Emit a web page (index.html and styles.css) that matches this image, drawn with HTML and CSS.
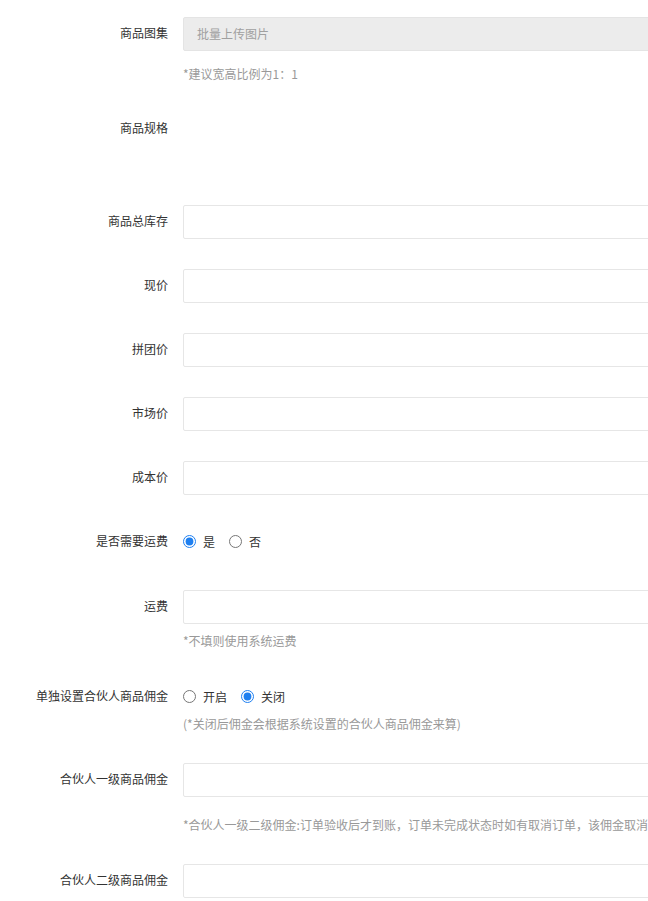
FILE: index.html
```html
<!DOCTYPE html>
<html lang="zh-CN">
<head>
<meta charset="utf-8">
<title>商品表单</title>
<link rel="stylesheet" href="styles.css">
</head>
<body>
<form class="form">
  <div class="row row-gallery">
    <label class="label">商品图集</label>
    <div class="field">
      <div class="upload">批量上传图片</div>
      <div class="hint hint-gallery">*建议宽高比例为1：1</div>
    </div>
  </div>

  <div class="row row-spec">
    <label class="label">商品规格</label>
    <div class="field"></div>
  </div>

  <div class="row row-first">
    <label class="label">商品总库存</label>
    <div class="field"><input class="input" type="text"></div>
  </div>
  <div class="row">
    <label class="label">现价</label>
    <div class="field"><input class="input" type="text"></div>
  </div>
  <div class="row">
    <label class="label">拼团价</label>
    <div class="field"><input class="input" type="text"></div>
  </div>
  <div class="row">
    <label class="label">市场价</label>
    <div class="field"><input class="input" type="text"></div>
  </div>
  <div class="row">
    <label class="label">成本价</label>
    <div class="field"><input class="input" type="text"></div>
  </div>

  <div class="row row-radio">
    <label class="label">是否需要运费</label>
    <div class="field radios">
      <label class="radio"><input type="radio" name="ship" checked><span>是</span></label>
      <label class="radio"><input type="radio" name="ship"><span>否</span></label>
    </div>
  </div>

  <div class="row row-freight">
    <label class="label">运费</label>
    <div class="field">
      <input class="input" type="text">
      <div class="hint hint-freight">*不填则使用系统运费</div>
    </div>
  </div>

  <div class="row row-commission">
    <label class="label">单独设置合伙人商品佣金</label>
    <div class="field">
      <div class="radios">
        <label class="radio"><input type="radio" name="comm"><span>开启</span></label>
        <label class="radio"><input type="radio" name="comm" checked><span>关闭</span></label>
      </div>
      <div class="hint hint-commission">(*关闭后佣金会根据系统设置的合伙人商品佣金来算)</div>
    </div>
  </div>

  <div class="row row-level1">
    <label class="label">合伙人一级商品佣金</label>
    <div class="field">
      <input class="input" type="text">
      <div class="hint hint-level1">*合伙人一级二级佣金:订单验收后才到账，订单未完成状态时如有取消订单，该佣金取消</div>
    </div>
  </div>

  <div class="row row-level2">
    <label class="label">合伙人二级商品佣金</label>
    <div class="field"><input class="input" type="text"></div>
  </div>
</form>
</body>
</html>
```

FILE: styles.css
```css
html, body {
  margin: 0;
  padding: 0;
  background: #fff;
  overflow: hidden;
}
body {
  font-family: "Microsoft YaHei", "Noto Sans CJK SC", "Noto Sans", sans-serif;
  font-size: 12px;
  color: #333;
  width: 648px;
}
.form {
  padding-top: 17px;
}
.row {
  display: flex;
  align-items: flex-start;
  margin-bottom: 30px;
}
.label {
  flex: 0 0 168px;
  width: 168px;
  margin-right: 15px;
  text-align: right;
  line-height: 32px;
  height: 34px;
  white-space: nowrap;
  color: #333;
}
.field {
  flex: 0 0 auto;
  width: 600px;
}
.upload {
  box-sizing: border-box;
  height: 34px;
  line-height: 32px;
  background: #ececec;
  border: 1px solid #e4e4e4;
  border-radius: 2px;
  padding-left: 13px;
  color: #a0a0a0;
}
.input {
  display: block;
  box-sizing: border-box;
  width: 600px;
  height: 34px;
  margin: 0;
  border: 1px solid #e6e6e6;
  border-radius: 2px;
  background: #fff;
  outline: none;
  padding: 0 10px;
  font: inherit;
}
.hint {
  color: #999;
  line-height: 20px;
  white-space: nowrap;
}
.hint-gallery { margin-top: 13px; }
.row-gallery { margin-bottom: 28px; }
.row-spec { margin-bottom: 59px; }
.row-spec .field { height: 34px; }

.radios {
  display: flex;
  align-items: center;
  height: 32px;
}
.radio {
  display: flex;
  align-items: center;
  margin-right: 14px;
  cursor: pointer;
}
.radio input {
  width: 13px;
  height: 13px;
  margin: 0 7px 0 0;
  accent-color: #1e7ff0;
}
.row-radio { margin-bottom: 31px; }

.hint-freight { margin-top: 7px; }
.row-freight { margin-bottom: 29px; }

.hint-commission { margin-top: 2px; }
.row-commission { margin-bottom: 29px; }

.hint-level1 { margin-top: 18px; }
.row-level1 { margin-bottom: 29px; }
.row-level2 { margin-bottom: 0; }
```
